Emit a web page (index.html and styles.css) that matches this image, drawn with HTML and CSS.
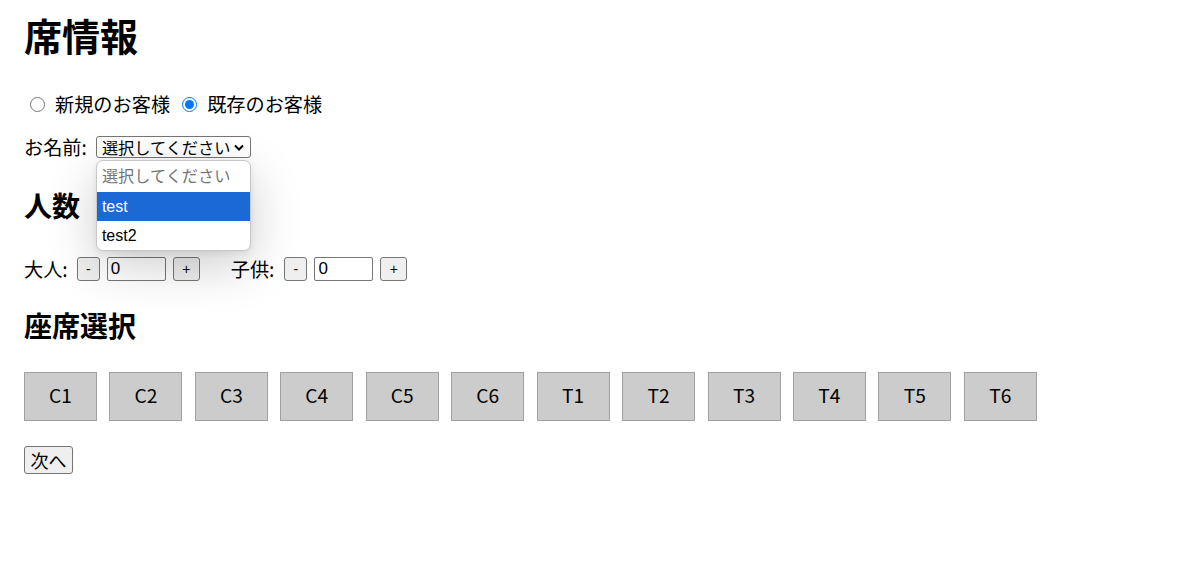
FILE: index.html
```html
<!DOCTYPE html>
<html lang="ja">
<head>
<meta charset="utf-8">
<title>席情報</title>
<link rel="stylesheet" href="styles.css">
</head>
<body>
<main class="page">
  <h1 class="title">席情報</h1>

  <div class="radio-row">
    <label class="radio"><input type="radio" name="customer"> 新規のお客様</label>
    <label class="radio"><input type="radio" name="customer" checked> 既存のお客様</label>
  </div>

  <div class="name-row">
    <span class="label">お名前:</span>
    <span class="select-wrap">
      <span class="select">
        <span class="select-text">選択してください</span>
        <svg class="chevron" width="10" height="7" viewBox="0 0 10 7"><path d="M1 1.5 L5 5.5 L9 1.5" fill="none" stroke="#000" stroke-width="2"/></svg>
      </span>
      <ul class="listbox">
        <li class="option placeholder">選択してください</li>
        <li class="option selected">test</li>
        <li class="option">test2</li>
      </ul>
    </span>
  </div>

  <h2 class="section">人数</h2>
  <div class="count-row">
    <div class="counter">
      <span class="label">大人:</span>
      <button class="step">-</button>
      <input class="num" type="text" value="0">
      <button class="step">+</button>
    </div>
    <div class="counter">
      <span class="label">子供:</span>
      <button class="step">-</button>
      <input class="num" type="text" value="0">
      <button class="step">+</button>
    </div>
  </div>

  <h2 class="section seats-title">座席選択</h2>
  <div class="seats">
    <button class="seat">C1</button>
    <button class="seat">C2</button>
    <button class="seat">C3</button>
    <button class="seat">C4</button>
    <button class="seat">C5</button>
    <button class="seat">C6</button>
    <button class="seat">T1</button>
    <button class="seat">T2</button>
    <button class="seat">T3</button>
    <button class="seat">T4</button>
    <button class="seat">T5</button>
    <button class="seat">T6</button>
  </div>

  <button class="next">次へ</button>
</main>
</body>
</html>
```

FILE: styles.css
```css
* { box-sizing: border-box; }

html, body {
  margin: 0;
  padding: 0;
  background: #fff;
}

body {
  font-family: "Noto Sans CJK JP", "Liberation Sans", sans-serif;
  color: #000;
  font-size: 19.2px;
}

.page {
  padding: 0 24px;
  display: flex;
  flex-direction: column;
  align-items: flex-start;
}

.title {
  margin: 12px 0 0;
  font-size: 38px;
  line-height: 46px;
  font-weight: 700;
}

.radio-row {
  margin-top: 34px;
  height: 24px;
  display: flex;
  align-items: center;
  gap: 6px;
}

.radio {
  display: flex;
  align-items: center;
  gap: 10px;
  line-height: 24px;
}

.radio input {
  width: 15px;
  height: 15px;
  margin: 0 0 0 6px;
}

.name-row {
  margin-top: 19px;
  height: 24px;
  display: flex;
  align-items: center;
  gap: 9px;
  line-height: 24px;
}

.select-wrap {
  position: relative;
  display: inline-block;
}

.select {
  display: flex;
  align-items: center;
  justify-content: space-between;
  width: 155px;
  height: 22px;
  padding: 0 6px 0 5px;
  border: 1px solid #767676;
  border-radius: 3px;
  font-size: 16.2px;
  background: #fff;
}

.select-text {
  line-height: 20px;
  white-space: nowrap;
}

.chevron { flex: none; }

.listbox {
  position: absolute;
  left: 0;
  top: 24px;
  width: 155px;
  margin: 0;
  padding: 0;
  list-style: none;
  background: #fff;
  border: 1px solid #c8c8c8;
  border-radius: 7px;
  overflow: hidden;
  box-shadow: 0 14px 50px rgba(0, 0, 0, 0.2), 0 2px 6px rgba(0, 0, 0, 0.08);
  z-index: 5;
  font-family: "Liberation Sans", "Noto Sans CJK JP", sans-serif;
  font-size: 16px;
}

.option {
  height: 29px;
  line-height: 29px;
  padding: 0 5px;
  white-space: nowrap;
  color: #000;
}

.option.placeholder {
  height: 31px;
  line-height: 28px;
  color: #757575;
  font-family: "Noto Sans CJK JP", sans-serif;
  font-size: 16.2px;
}

.option.selected {
  background: #1a69d4;
  color: #fff;
}

.section {
  margin: 29px 0 0;
  font-size: 28px;
  line-height: 34px;
  font-weight: 700;
}

.count-row {
  margin-top: 34px;
  display: flex;
  align-items: center;
  gap: 31px;
  height: 25px;
}

.counter {
  display: flex;
  align-items: center;
  gap: 7px;
}

.counter .label { margin-right: 2px; }

.counter + .counter .label { margin-right: 3px; }

.step {
  width: 23px;
  height: 24px;
  padding: 0;
  border: 1px solid #767676;
  border-radius: 3px;
  background: #efefef;
  font-family: "Liberation Sans", sans-serif;
  font-size: 14px;
  color: #000;
}

.counter .step:last-child { width: 27px; }

.num {
  width: 59px;
  height: 24px;
  padding: 0 3px;
  border: 1px solid #767676;
  border-radius: 2px;
  font-family: "Liberation Sans", sans-serif;
  font-size: 17px;
  color: #000;
  background: #fff;
}

.seats-title { margin-top: 27px; }

.seats {
  margin-top: 30px;
  display: flex;
  gap: 12.45px;
}

.seat {
  width: 73px;
  height: 49px;
  padding: 0 0 3px;
  background: #cccccc;
  border: 1px solid #a0a0a0;
  border-radius: 0;
  font-family: "Noto Sans CJK JP", "Liberation Sans", sans-serif;
  font-size: 19.2px;
  color: #000;
}

.next {
  margin-top: 25px;
  width: 49px;
  height: 28px;
  padding: 0;
  border: 1px solid #767676;
  border-radius: 3px;
  background: #efefef;
  font-family: "Noto Sans CJK JP", sans-serif;
  font-size: 18px;
  line-height: 1;
  color: #000;
}
```
